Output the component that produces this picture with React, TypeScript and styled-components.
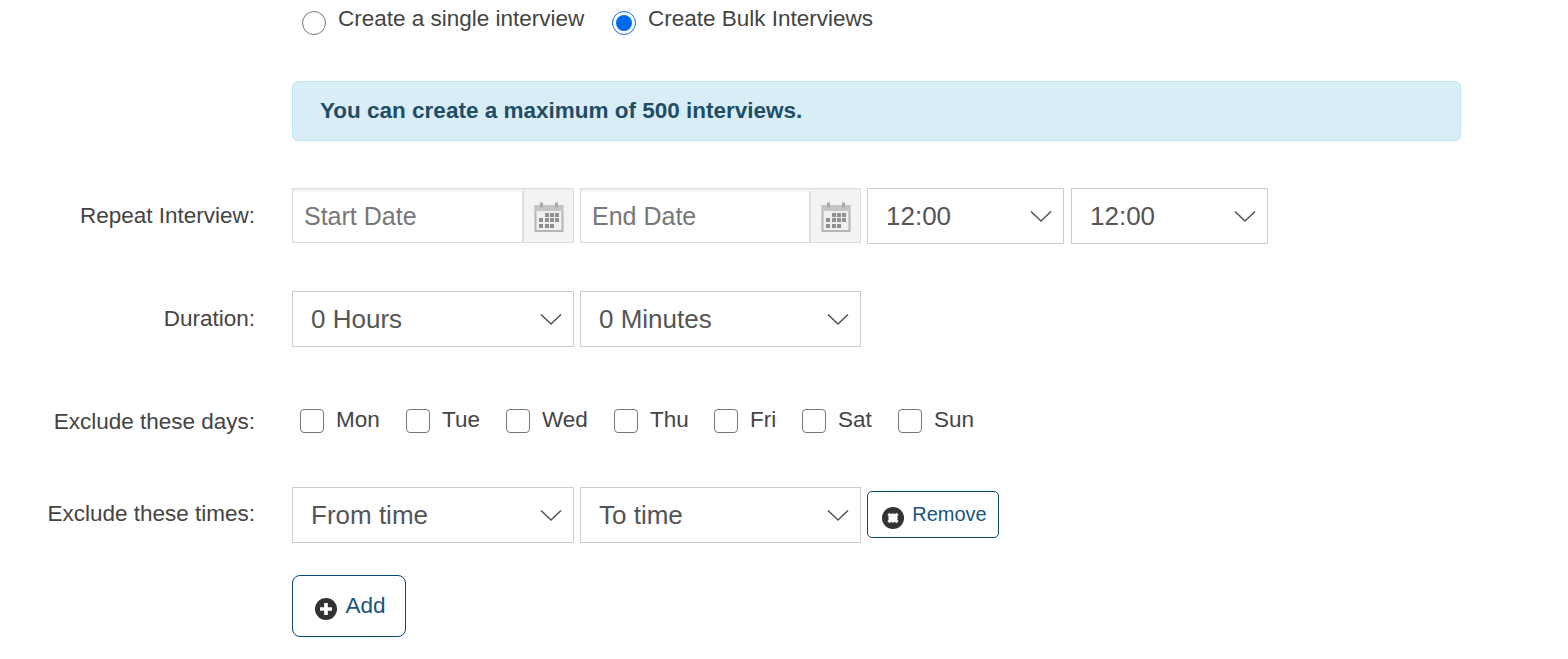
import React from "react";
import styled, { createGlobalStyle } from "styled-components";

const Global = createGlobalStyle`
  html, body { margin: 0; padding: 0; background: #fff; }
  body { font-family: "Liberation Sans", Arial, sans-serif; color: #444; overflow: hidden; }
`;
const Page = styled.div`
  width: 1568px; height: 659px; display: grid;
  grid-template-columns: 255px 1169px; column-gap: 37px; align-content: start;
`;
const Label = styled.div<{ $top: number }>`
  text-align: right; font-size: 22.5px; line-height: 26px; color: #444; padding-top: ${p => p.$top}px;
`;
const Content = styled.div<{ $bottom: number }>`
  display: flex; align-items: flex-start; gap: 6px; margin-bottom: ${p => p.$bottom}px; min-width: 0;
`;
const AddRow = styled(Content)`
  grid-column: 2;
`;
const RadioRow = styled.div`
  grid-column: 2; display: flex; height: 36px; margin-bottom: 45px; padding-left: 10px;
`;
const RadioItem = styled.div<{ $w: number }>`
  width: ${p => p.$w}px; display: flex; gap: 12px; align-items: flex-start; padding-top: 5px;
`;
const RadioText = styled.span`
  font-size: 22.5px; line-height: 27px; color: #444;
`;
const Radio = styled.span<{ $on?: boolean }>`
  width: 24px; height: 24px; margin-top: 6px; border-radius: 50%; box-sizing: border-box; flex: none;
  border: 1px solid ${p => (p.$on ? "#0a6fe8" : "#767676")}; background: #fff;
  display: flex; align-items: center; justify-content: center;
  &::after { content: ""; width: 16px; height: 16px; border-radius: 50%; background: ${p => (p.$on ? "#0069ed" : "transparent")}; }
`;
const Alert = styled.div`
  grid-column: 2; height: 60px; box-sizing: border-box; margin-bottom: 47px;
  background: #d9edf7; border: 1px solid #bce8f1; border-radius: 6px;
  padding: 0 27px; display: flex; align-items: center;
  font-size: 22.5px; font-weight: 700; color: #1f4d66;
`;
const DateBox = styled.div<{ $w: number }>`
  width: ${p => p.$w}px; height: 55px; box-sizing: border-box; border: 1px solid #dcdcdc; display: flex; background: #fff;
  padding-top: 2px; box-shadow: inset 0 4px 3px -2px #ececec;
`;
const DateText = styled.div`
  flex: 1; padding-left: 11px; font-size: 25px; line-height: 51px; color: #777;
`;
const DateAddon = styled.div`
  width: 51px; background: #f3f3f3; border-left: 2px solid #dedede; display: flex; align-items: center; justify-content: center;
  box-sizing: border-box;
`;
const Select = styled.div<{ $w: number; $ml?: number }>`
  width: ${p => p.$w}px; height: 56px; box-sizing: border-box; border: 1px solid #ccc; background: #fff;
  margin-left: ${p => p.$ml ?? 0}px;
  display: flex; align-items: center; justify-content: space-between; padding: 0 10px 0 18px;
  font-size: 26px; color: #555;
`;
const Days = styled.div`
  display: flex; padding: 7px 0 0 8px; height: 26px;
`;
const Day = styled.div<{ $w: number }>`
  width: ${p => p.$w}px; display: flex; align-items: flex-start;
`;
const Box = styled.span`
  width: 24px; height: 24px; box-sizing: border-box; border: 1px solid #777; border-radius: 4px; background: #fff; flex: none; margin-top: 1px;
`;
const DayText = styled.span`
  margin-left: 12px; font-size: 22.5px; line-height: 24px; color: #444;
`;
const Btn = styled.div<{ $w: number; $h: number; $size: number; $mt: number; $r: number }>`
  width: ${p => p.$w}px; height: ${p => p.$h}px; margin-top: ${p => p.$mt}px; box-sizing: border-box;
  border: 1px solid #0b4a70; border-radius: ${p => p.$r}px; background: #fff; color: #1a5480;
  display: flex; align-items: center; justify-content: center; gap: 8px; font-size: ${p => p.$size}px;
  padding-left: 3px;
`;

const Chevron = () => (
  <svg width="24" height="14" viewBox="0 0 24 14" fill="none" stroke="#555" strokeWidth="1.6"><path d="M2 2.5 12 12 22 2.5" /></svg>
);
const Calendar = () => (
  <svg width="30" height="32" viewBox="0 0 30 32" style={{ filter: "blur(0.6px)" }}>
    <path d="M1.5 5h27v25h-27z" fill="#efefef" stroke="#b5b5b5" strokeWidth="2" />
    <rect x="1" y="4" width="28" height="6" fill="#c4c4c4" />
    <rect x="6" y="1.5" width="3" height="5" fill="#aaa" /><rect x="21" y="1.5" width="3" height="5" fill="#aaa" />
    {[[11,12],[16,12],[21,12],[5,17],[11,17],[16,17],[21,17],[5,23],[11,23],[16,23]].map(([x, y]) => (
      <rect key={`${x}-${y}`} x={x} y={y} width="4" height="4" fill="#8f8f8f" />
    ))}
  </svg>
);
const RoundIcon = ({ size, x }: { size: number; x?: boolean }) => (
  <svg width={size} height={size} viewBox="0 0 24 24" style={{ marginTop: 6, filter: "blur(0.5px)" }}>
    <circle cx="12" cy="12" r="12" fill="#333" />
    {x
      ? <path d="M7 7.5 17 16.5M17 7.5 7 16.5M12 7v10M7 12h10" stroke="#fff" strokeWidth="3.4" />
      : <path d="M5.5 10h4.5V5.5h4V10h4.5v4H14v4.5h-4V14H5.5z" fill="#fff" />}
  </svg>
);

const days: [string, number][] = [["Mon", 106], ["Tue", 100], ["Wed", 108], ["Thu", 100], ["Fri", 88], ["Sat", 96], ["Sun", 90]];

export default function App() {
  return (
    <Page>
      <Global />
      <RadioRow>
        <RadioItem $w={310}><Radio /><RadioText>Create a single interview</RadioText></RadioItem>
        <RadioItem $w={300}><Radio $on /><RadioText>Create Bulk Interviews</RadioText></RadioItem>
      </RadioRow>
      <Alert>You can create a maximum of 500 interviews.</Alert>

      <Label $top={15}>Repeat Interview:</Label>
      <Content $bottom={47}>
        <DateBox $w={282}><DateText>Start Date</DateText><DateAddon><Calendar /></DateAddon></DateBox>
        <DateBox $w={281}><DateText>End Date</DateText><DateAddon><Calendar /></DateAddon></DateBox>
        <Select $w={197}>12:00<Chevron /></Select>
        <Select $w={197} $ml={1}>12:00<Chevron /></Select>
      </Content>

      <Label $top={15}>Duration:</Label>
      <Content $bottom={54}>
        <Select $w={282}>0 Hours<Chevron /></Select>
        <Select $w={281}>0 Minutes<Chevron /></Select>
      </Content>

      <Label $top={8}>Exclude these days:</Label>
      <Content $bottom={53}>
        <Days>
          {days.map(([d, w]) => <Day key={d} $w={w}><Box /><DayText>{d}</DayText></Day>)}
        </Days>
      </Content>

      <Label $top={14}>Exclude these times:</Label>
      <Content $bottom={32}>
        <Select $w={282}>From time<Chevron /></Select>
        <Select $w={281}>To time<Chevron /></Select>
        <Btn $w={132} $h={47} $size={20} $mt={4} $r={5}><RoundIcon size={22} x />Remove</Btn>
      </Content>

      <AddRow $bottom={0}>
        <Btn $w={114} $h={62} $size={22.5} $mt={0} $r={8}><RoundIcon size={22} />Add</Btn>
      </AddRow>
    </Page>
  );
}
